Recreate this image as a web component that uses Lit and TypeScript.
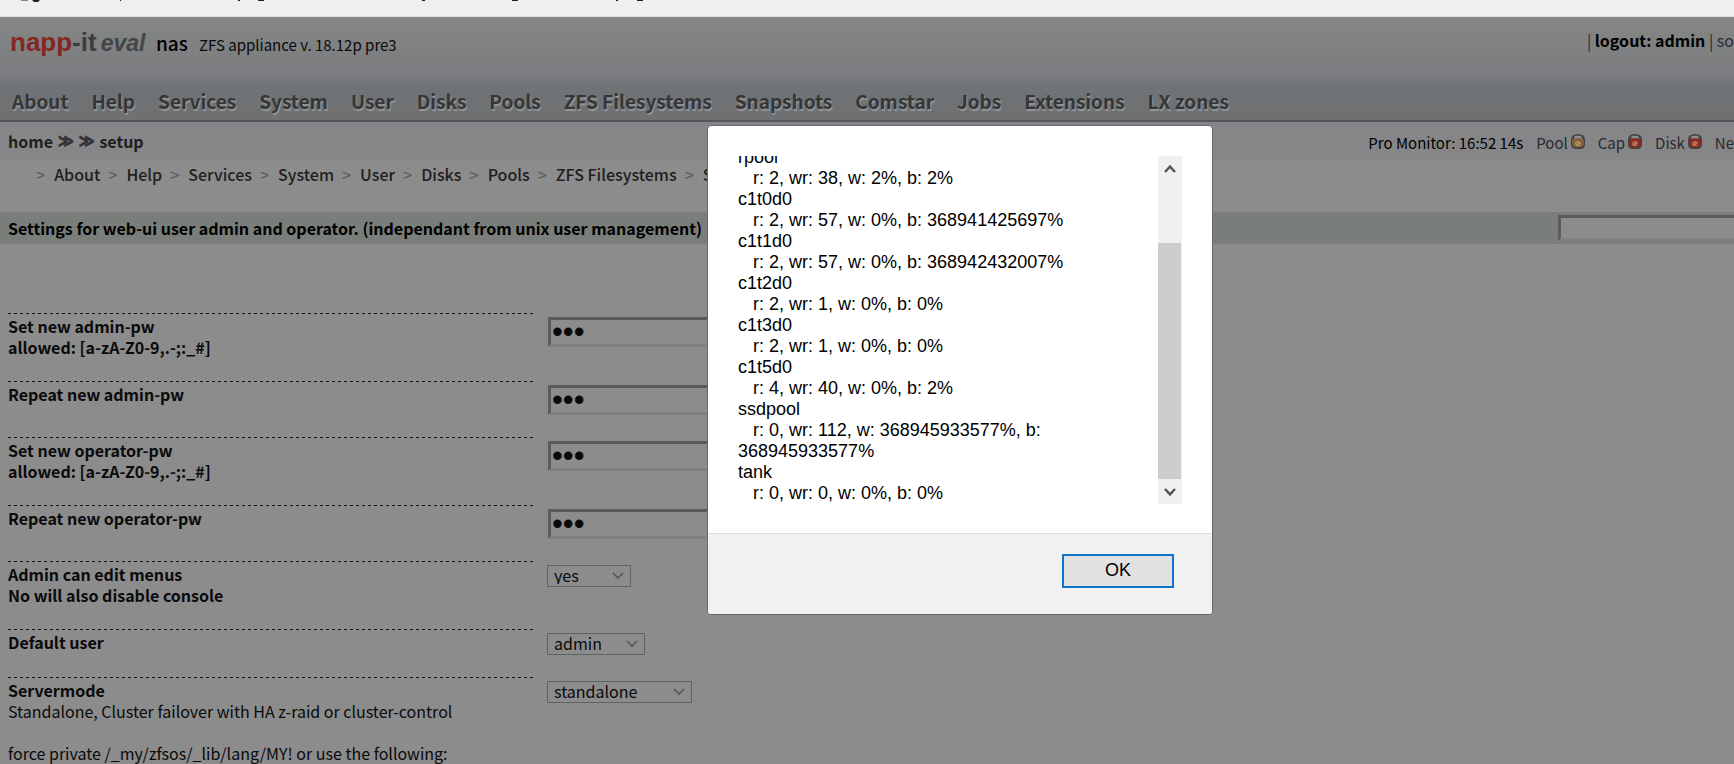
import { LitElement, html, css, svg } from "lit";
import { customElement } from "lit/decorators.js";

const MENU = ["About", "Help", "Services", "System", "User", "Disks", "Pools", "ZFS Filesystems", "Snapshots", "Comstar", "Jobs", "Extensions", "LX zones"];

const TRAIL = MENU.slice(0, 9);

const LAMPS = [
  { name: "Pool", body: "#80613a", glow: "#ab9464" },
  { name: "Cap", body: "#8c2a22", glow: "#b0795c" },
  { name: "Disk", body: "#8c2a22", glow: "#b0795c" },
];

const ROWS = [
  { id: "admin-pw", lines: ["Set new admin-pw", "allowed: [a-zA-Z0-9,.-;:_#]"], kind: "password", value: "" },
  { id: "admin-pw2", lines: ["Repeat new admin-pw"], kind: "password", value: "" },
  { id: "operator-pw", lines: ["Set new operator-pw", "allowed: [a-zA-Z0-9,.-;:_#]"], kind: "password", value: "" },
  { id: "operator-pw2", lines: ["Repeat new operator-pw"], kind: "password", value: "" },
  { id: "edit-menus", lines: ["Admin can edit menus", "No will also disable console"], kind: "small", value: "yes" },
  { id: "default-user", lines: ["Default user"], kind: "medium", value: "admin" },
  { id: "servermode", lines: ["Servermode"], note: "Standalone, Cluster failover with HA z-raid or cluster-control", kind: "large", value: "standalone" },
];

const REPORT = [
  "rpool",
  "   r: 2, wr: 38, w: 2%, b: 2%",
  "c1t0d0",
  "   r: 2, wr: 57, w: 0%, b: 368941425697%",
  "c1t1d0",
  "   r: 2, wr: 57, w: 0%, b: 368942432007%",
  "c1t2d0",
  "   r: 2, wr: 1, w: 0%, b: 0%",
  "c1t3d0",
  "   r: 2, wr: 1, w: 0%, b: 0%",
  "c1t5d0",
  "   r: 4, wr: 40, w: 0%, b: 2%",
  "ssdpool",
  "   r: 0, wr: 112, w: 368945933577%, b: 368945933577%",
  "tank",
  "   r: 0, wr: 0, w: 0%, b: 0%",
].join("\n");

@customElement("status-dialog")
export class StatusDialog extends LitElement {
  static styles = css`
    * { box-sizing: border-box; }
    .box {
      position: absolute;
      top: 125px;
      left: 707px;
      right: auto;
      width: 506px;
      margin: 0;
      padding: 0;
      border: 1px solid #66676a;
      border-radius: 4px;
      overflow: hidden;
      background: #fff;
      color: #000;
      font: 18px/21px "Liberation Sans", Arial, sans-serif;
    }
    .body { display: flex; padding: 30px 30px 29px; }
    .report {
      flex: 1;
      height: 348px;
      display: flex;
      flex-direction: column;
      justify-content: flex-end;
      overflow: hidden;
      white-space: pre-wrap;
    }
    .bar { width: 24px; display: flex; flex-direction: column; background: #f0f0f0; }
    .arrow { height: 25px; flex: none; padding: 0; border: 0; background: none; display: grid; place-items: center; }
    .arrow svg { display: block; }
    .thumb { flex: 1; margin: 62px 1px 0 0; background: #cdcdcd; }
    .foot { display: flex; justify-content: flex-end; padding: 20px 38px 26px; background: #f1f1f1; border-top: 1px solid #dfdfdf; }
    .ok {
      width: 112px;
      height: 34px;
      padding: 0 0 2px;
      border: 2px solid #1273cf;
      background: #e1e1e1;
      color: #000;
      font: inherit;
    }
  `;
  render() {
    return html`<dialog class="box" open aria-label="Monitor status">
      <div class="body">
        <div class="report"><div>${REPORT}</div></div>
        <div class="bar">
          <button class="arrow" aria-label="Scroll up"><svg width="12" height="10" viewBox="0 0 12 10" fill="none" stroke="#555" stroke-width="2.4"><path d="M1 8l5-5.4L11 8" /></svg></button>
          <div class="thumb"></div>
          <button class="arrow" aria-label="Scroll down"><svg width="12" height="10" viewBox="0 0 12 10" fill="none" stroke="#555" stroke-width="2.4"><path d="M1 2l5 5.4L11 2" /></svg></button>
        </div>
      </div>
      <div class="foot"><button class="ok">OK</button></div>
    </dialog>`;
  }
}

@customElement("app-root")
export class AppRoot extends LitElement {
  static styles = css`
    * { box-sizing: border-box; }
    :host {
      display: block;
      position: relative;
      height: 100vh;
      overflow: hidden;
      background: #8c8c8c;
      color: #0a0a0b;
      font: 16px/21px "Noto Sans CJK SC", sans-serif;
    }
    a { color: inherit; text-decoration: none; white-space: nowrap; }
    .strip { height: 17px; background: #efefef; border-bottom: 1px solid #dcdcdc; }
    .strip svg { display: block; }
    .head {
      height: 105px;
      display: flex;
      flex-direction: column;
      justify-content: space-between;
      background: linear-gradient(#858685, #7b7c7f 55%, #707476 66%, #6f7072);
      border-bottom: 2px solid #54565b;
    }
    .brand { display: flex; align-items: baseline; padding: 13px 0 0 10px; line-height: 24px; white-space: nowrap; }
    .logo { width: 136px; font: 700 26px/24px "Liberation Sans", Arial, sans-serif; color: #3c3d3f; }
    .logo .red { color: #842826; }
    .logo .edition { margin-left: 4px; font-size: 23px; font-style: italic; color: #444547; }
    .host { font-size: 19px; font-weight: 500; margin-left: 10px; color: #000; }
    .version { margin-left: 11px; flex: 1; font-size: 15px; }
    .account { align-self: flex-start; line-height: 21px; color: #2a2a2c; }
    .account b { color: #000; }
    .menu {
      display: flex;
      gap: 23px;
      padding: 0 0 7px 12px;
      font-size: 19px;
      line-height: 24px;
      font-weight: 700;
      color: #363636;
      text-shadow: 1px 2px 1px #94989a;
    }
    .crumbs { height: 38px; display: flex; align-items: center; padding-left: 8px; background: #868688; color: #1e1e20; }
    .path { flex: 1; display: flex; align-items: center; gap: 5px; font-weight: 700; }
    .path .sep { font: 700 15px/21px "DejaVu Sans", sans-serif; color: #333336; -webkit-text-stroke: 1px #333336; }
    .monitor { display: flex; align-items: center; gap: 13px; padding-top: 2px; font-size: 15px; color: #2a2a2c; white-space: nowrap; }
    .clock { color: #000; }
    .lamp { display: flex; align-items: center; gap: 3px; }
    .lamp svg { display: block; margin-bottom: 2px; }
    .tail { height: 52px; padding: 4px 0 0 36px; display: flex; gap: 8px; font-weight: 500; color: #1e1e20; white-space: nowrap; }
    .tail a { margin-left: 1px; }
    .tail .sep { color: #5c5f63; }
    .title { height: 32px; background: #7a7e7a; display: flex; align-items: center; padding-left: 8px; color: #000; }
    .title h1 { flex: 1; margin: 0; font-size: 16px; font-weight: 700; white-space: nowrap; }
    .search, .pw { border: 3px solid; border-color: #5a5c5c #7e8080 #7e8080 #5a5c5c; background: #8c8c8c; border-radius: 0; outline: 0; color: #0a0a0b; }
    .search { width: 176px; height: 26px; border-right: 0; }
    .form { padding: 69px 8px 0; }
    .row { display: grid; grid-template-columns: 525px 1fr; column-gap: 14px; align-items: start; }
    .text { padding: 3px 0 23px; background: repeating-linear-gradient(90deg, #111 0 3px, transparent 3px 6px) top / 100% 1px no-repeat; }
    .text label { display: block; font-weight: 700; }
    .field { padding: 4px 0 22px; }
    .row:last-of-type .text { padding-bottom: 21px; }
    .pw { display: block; width: 240px; height: 30px; margin-left: 1px; padding: 0 0 0 1px; font: 31px/24px "Liberation Sans", sans-serif; }
    .pick {
      display: block;
      appearance: none;
      height: 22px;
      padding: 0 0 2px 6px;
      border: 1px solid #606264;
      border-radius: 0;
      color: #0a0a0b;
      font: inherit;
      line-height: 18px;
      background: #8c8c8c url("data:image/svg+xml,%3Csvg xmlns='http://www.w3.org/2000/svg' width='12' height='8' fill='none' stroke='%2354585b' stroke-width='1.7'%3E%3Cpath d='M1 1l5 5 5-5'/%3E%3C/svg%3E") right 6px center no-repeat;
    }
    .small { width: 84px; }
    .medium { width: 98px; }
    .large { width: 145px; }
    .note { margin: 0; }
  `;

  private lamp(l: { name: string; body: string; glow: string }) {
    return html`<span class="lamp">${l.name}<svg width="14" height="15" viewBox="0 0 14 15">
      ${svg`<path d="M0 10V6Q0 0 7 0t7 6v4q0 5-5 5H5q-5 0-5-5z" fill="#3f3f44"/>
      <path d="M4 1.800h6l1.500 3h-9z" fill="#8d8e92"/>
      <path d="M1 7q0-2 3-2.500h6q3 .5 3 2.500v3q-1 3.500-4 3.500H5q-3 0-4-3.500z" fill=${l.body}/>
      <path d="M4 8.500q3-3 6 0l-.8 3.500H4.800z" fill=${l.glow}/>
      <path d="M5.300 9h1M8 10.500h1" stroke=${l.body}/>`}
    </svg></span>`;
  }

  private field(r: (typeof ROWS)[number]) {
    return r.kind === "password"
      ? html`<input class="pw" id=${r.id} type="password" value="abc" />`
      : html`<select class="pick ${r.kind}" id=${r.id}><option>${r.value}</option></select>`;
  }

  render() {
    return html`<div class="strip">
        <svg width="660" height="3" viewBox="0 0 660 3" fill="#222">
          <path fill="#888" d="M21 0h7v1h-7z" />
          <path d="M32 0h8l-2 2h-4zM120 0h1v1h-1zM238 0h2v1h-2zM258 0h6v1h-6zM422 0h3v1h-3zM512 0h6v1h-6zM616 0h2v1h-2zM637 0h6v1h-6z" />
        </svg>
      </div>
      <header class="head">
        <div class="brand">
          <span class="logo"><span class="red">napp</span>-it<span class="edition">eval</span></span>
          <span class="host">nas</span><span class="version">ZFS appliance v. 18.12p pre3</span>
          <span class="account">| <b>logout: admin</b> | so</span>
        </div>
        <nav class="menu">${MENU.map((m) => html`<a href="#">${m}</a>`)}</nav>
      </header>
      <div class="crumbs">
        <span class="path"><a href="#">home</a><span class="sep">≫</span><span class="sep">≫</span><a href="#">setup</a></span>
        <span class="monitor"><span class="clock">Pro Monitor: 16:52 14s</span>${LAMPS.map((l) => this.lamp(l))}<span>Ne</span></span>
      </div>
      <div class="tail">${TRAIL.map((m) => html`<span class="sep">&gt;</span><a href="#">${m}</a>`)}</div>
      <div class="title">
        <h1>Settings for web-ui user admin and operator. (independant from unix user management)</h1>
        <input class="search" type="text" aria-label="Search" />
      </div>
      <form class="form">
        ${ROWS.map(
          (r) => html`<div class="row">
            <div class="text">
              <label for=${r.id}>${r.lines.map((t, i) => (i ? html`<br />${t}` : t))}</label>
              ${r.note ? html`<p class="note">${r.note}</p>` : ""}
            </div>
            <div class="field">${this.field(r)}</div>
          </div>`
        )}
        <p class="note">force private /_my/zfsos/_lib/lang/MY! or use the following:</p>
      </form>
      <status-dialog></status-dialog>`;
  }
}
